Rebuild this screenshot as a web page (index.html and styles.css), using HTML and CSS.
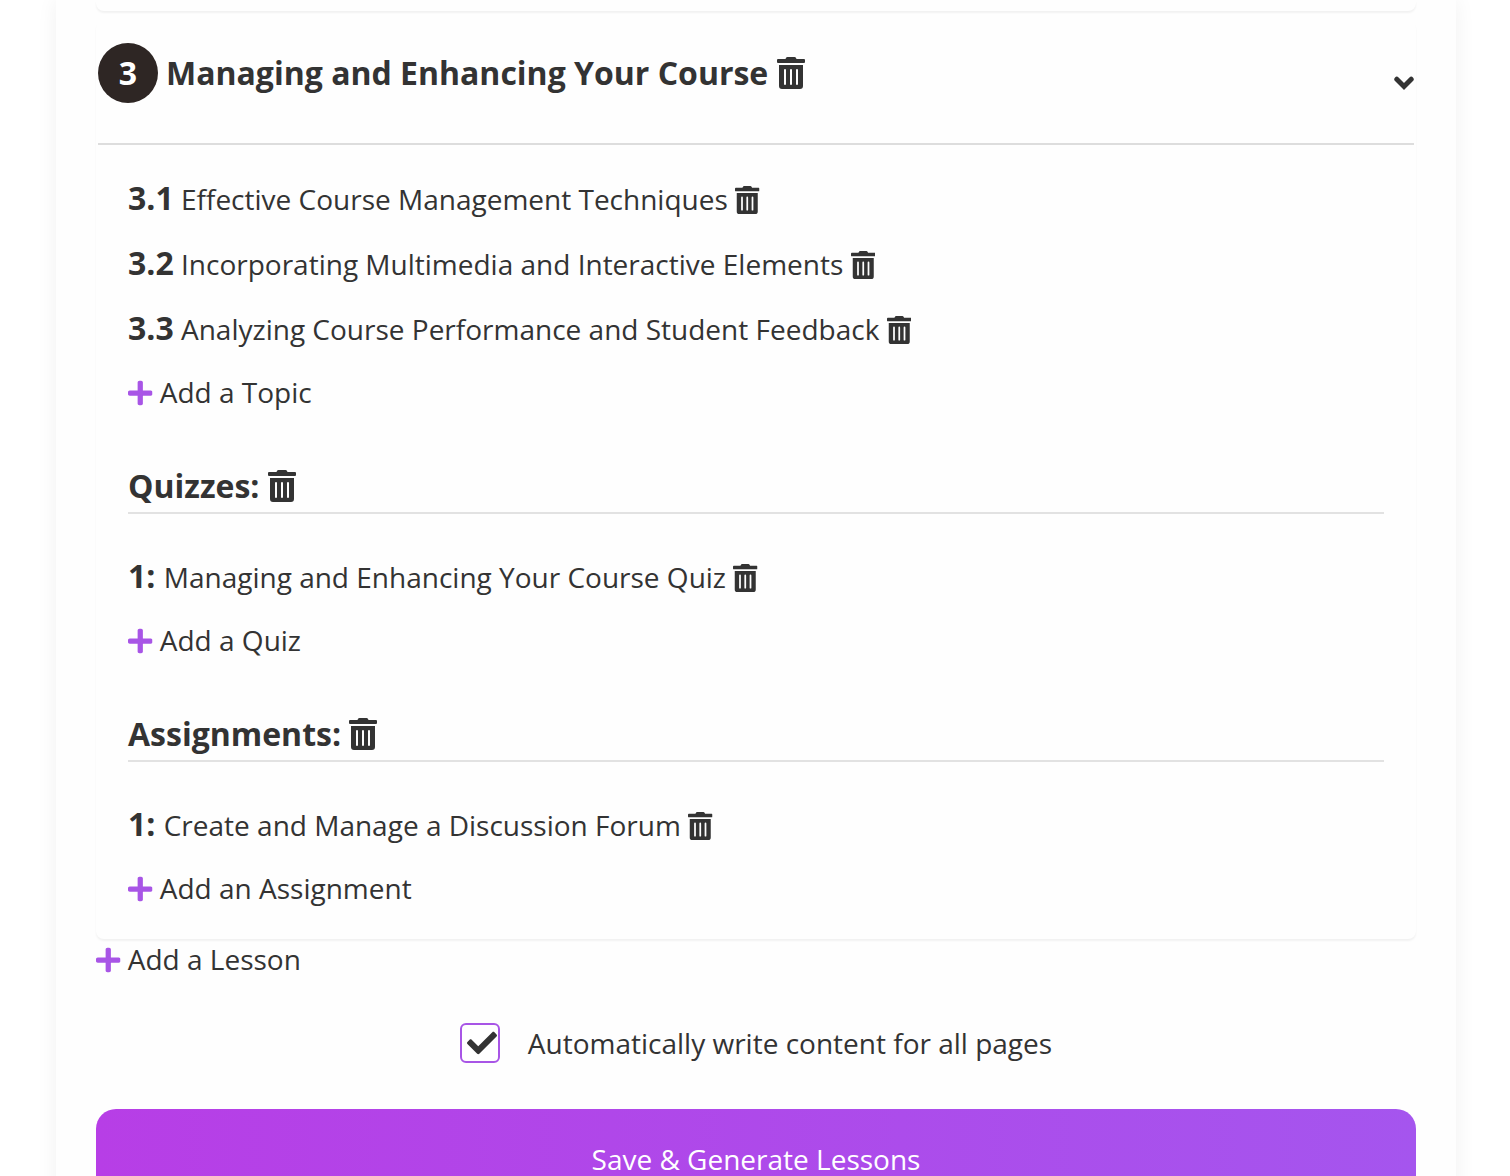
FILE: index.html
```html
<!DOCTYPE html>
<html lang="en">
<head>
<meta charset="utf-8">
<meta name="viewport" content="width=device-width, initial-scale=1">
<title>Course outline</title>
<link rel="stylesheet" href="styles.css">
</head>
<body>
<svg class="sprite" aria-hidden="true">
  <symbol id="trash" viewBox="0 0 448 512"><path d="M32 464a48 48 0 0 0 48 48h288a48 48 0 0 0 48-48V128H32zm272-256a16 16 0 0 1 32 0v224a16 16 0 0 1-32 0zm-96 0a16 16 0 0 1 32 0v224a16 16 0 0 1-32 0zm-96 0a16 16 0 0 1 32 0v224a16 16 0 0 1-32 0zM432 32H312l-9.400-18.700A24 24 0 0 0 281.100 0H166.800a23.720 23.720 0 0 0-21.400 13.300L136 32H16A16 16 0 0 0 0 48v32a16 16 0 0 0 16 16h416a16 16 0 0 0 16-16V48a16 16 0 0 0-16-16z"/></symbol>
  <symbol id="plus" viewBox="0 0 448 512"><path d="M416 208H272V64c0-17.670-14.330-32-32-32h-32c-17.670 0-32 14.330-32 32v144H32c-17.670 0-32 14.330-32 32v32c0 17.670 14.330 32 32 32h144v144c0 17.670 14.330 32 32 32h32c17.670 0 32-14.330 32-32V304h144c17.670 0 32-14.330 32-32v-32c0-17.670-14.330-32-32-32z"/></symbol>
</svg>
<main class="page">
  <form class="panel">
    <div class="card card-previous"></div>
    <section class="card">
      <header class="lesson-header">
        <span class="lesson-number">3</span>
        <h2 class="lesson-title">Managing and Enhancing Your Course <button type="button" class="icon-button" aria-label="Delete lesson"><svg class="icon"><use href="#trash"/></svg></button></h2>
        <button type="button" class="icon-button toggle" aria-label="Collapse lesson"><svg class="chevron" viewBox="0 0 20 14"><path d="M2.800 3.200 10 10.400 17.200 3.200"/></svg></button>
      </header>
      <div class="lesson-body">
        <ol class="items">
          <li><strong>3.1</strong> Effective Course Management Techniques <button type="button" class="icon-button" aria-label="Delete topic 3.1"><svg class="icon"><use href="#trash"/></svg></button></li>
          <li><strong>3.2</strong> Incorporating Multimedia and Interactive Elements <button type="button" class="icon-button" aria-label="Delete topic 3.2"><svg class="icon"><use href="#trash"/></svg></button></li>
          <li><strong>3.3</strong> Analyzing Course Performance and Student Feedback <button type="button" class="icon-button" aria-label="Delete topic 3.3"><svg class="icon"><use href="#trash"/></svg></button></li>
        </ol>
        <button type="button" class="add"><svg class="icon"><use href="#plus"/></svg> Add a Topic</button>

        <h3 class="group-title">Quizzes: <button type="button" class="icon-button" aria-label="Delete quizzes"><svg class="icon"><use href="#trash"/></svg></button></h3>
        <ol class="items">
          <li><strong>1: </strong>Managing and Enhancing Your Course Quiz <button type="button" class="icon-button" aria-label="Delete quiz 1"><svg class="icon"><use href="#trash"/></svg></button></li>
        </ol>
        <button type="button" class="add"><svg class="icon"><use href="#plus"/></svg> Add a Quiz</button>

        <h3 class="group-title">Assignments: <button type="button" class="icon-button" aria-label="Delete assignments"><svg class="icon"><use href="#trash"/></svg></button></h3>
        <ol class="items">
          <li><strong>1: </strong>Create and Manage a Discussion Forum <button type="button" class="icon-button" aria-label="Delete assignment 1"><svg class="icon"><use href="#trash"/></svg></button></li>
        </ol>
        <button type="button" class="add"><svg class="icon"><use href="#plus"/></svg> Add an Assignment</button>
      </div>
    </section>
    <button type="button" class="add add-lesson"><svg class="icon"><use href="#plus"/></svg> Add a Lesson</button>
    <div class="option">
      <span class="checkbox">
        <input type="checkbox" id="auto-write" checked>
        <svg class="check" viewBox="0 0 512 512"><path d="M173.898 439.404l-166.400-166.400c-9.997-9.997-9.997-26.206 0-36.204l36.203-36.204c9.997-9.998 26.207-9.998 36.204 0L192 312.690 432.095 72.596c9.997-9.997 26.207-9.997 36.204 0l36.203 36.204c9.997 9.997 9.997 26.206 0 36.204l-294.400 294.401c-9.998 9.997-26.207 9.997-36.204-.001z"/></svg>
      </span>
      <label for="auto-write">Automatically write content for all pages</label>
    </div>
    <button type="submit" class="save">Save &amp; Generate Lessons</button>
  </form>
</main>
</body>
</html>
```
FILE: styles.css
```css
* {
  box-sizing: border-box;
}

body {
  margin: 0;
  background: #fff;
  color: #333;
  font-family: "Open Sans", "Noto Sans", sans-serif;
  font-size: 28px;
}

button {
  border: 0;
  background: none;
  color: inherit;
  font: inherit;
  cursor: pointer;
}

.sprite {
  display: none;
}

.page {
  height: 100vh;
  overflow-y: auto;
  scrollbar-width: none;
  padding: 0 54px 0 56px;
}

.panel {
  display: flex;
  flex-direction: column;
  padding: 0 40px 40px;
  background: #fefefe;
  box-shadow: 0 0 20px rgba(0, 0, 0, 0.06);
}

.card {
  border: 2px solid transparent;
  border-radius: 8px;
  box-shadow: 0 2px 2px rgba(0, 0, 0, 0.05);
}

.card-previous {
  height: 11px;
  margin-bottom: 10px;
  border-radius: 0 0 8px 8px;
}

.lesson-header {
  display: flex;
  align-items: center;
  gap: 8px;
  padding: 20px 0 40px;
  border-bottom: 2px solid #ddd;
}

.lesson-number {
  width: 60px;
  height: 60px;
  border-radius: 50%;
  background: #2e2624;
  color: #fff;
  font-size: 32px;
  font-weight: 700;
  line-height: 60px;
  text-align: center;
}

.lesson-title {
  flex: 1;
  margin: 0;
  font-size: 32px;
  line-height: 44px;
}

.icon-button {
  padding: 0;
}

.icon {
  width: 0.875em;
  height: 1em;
  fill: currentColor;
  vertical-align: -0.125em;
}

.toggle {
  padding-top: 20px;
  line-height: 0;
}

.chevron {
  width: 20px;
  height: 14px;
  fill: none;
  stroke: currentColor;
  stroke-width: 5;
  stroke-linecap: round;
}

.lesson-body {
  padding: 21px 30px 29px;
}

.items {
  margin: 0 0 11px;
  padding: 0;
  list-style: none;
  line-height: 64px;
}

.items strong {
  font-size: 32px;
}

.add {
  display: block;
  padding: 0;
  line-height: 40px;
  text-align: left;
}

.add .icon {
  color: #a855e6;
}

.add-lesson {
  align-self: flex-start;
}

.group-title {
  margin: 52px 0 30px;
  padding-bottom: 4px;
  border-bottom: 2px solid #e2e2e2;
  font-size: 32px;
  line-height: 44px;
}

.option {
  display: flex;
  justify-content: center;
  align-items: center;
  gap: 28px;
  margin: 44px 0 46px;
  line-height: 40px;
}

.checkbox {
  display: grid;
  place-items: center;
}

.checkbox > * {
  grid-area: 1 / 1;
}

.checkbox input {
  appearance: none;
  width: 40px;
  height: 40px;
  margin: 0;
  border: 2px solid #a855e6;
  border-radius: 6px;
  background: #fff;
}

.check {
  width: 30px;
  height: 30px;
  margin-left: 4px;
  fill: #333;
  visibility: hidden;
  pointer-events: none;
}

input:checked + .check {
  visibility: visible;
}

.save {
  padding: 30px;
  border-radius: 20px;
  background: linear-gradient(90deg, #b73ee6, #a555ee);
  color: #fff;
  line-height: 40px;
}
```
